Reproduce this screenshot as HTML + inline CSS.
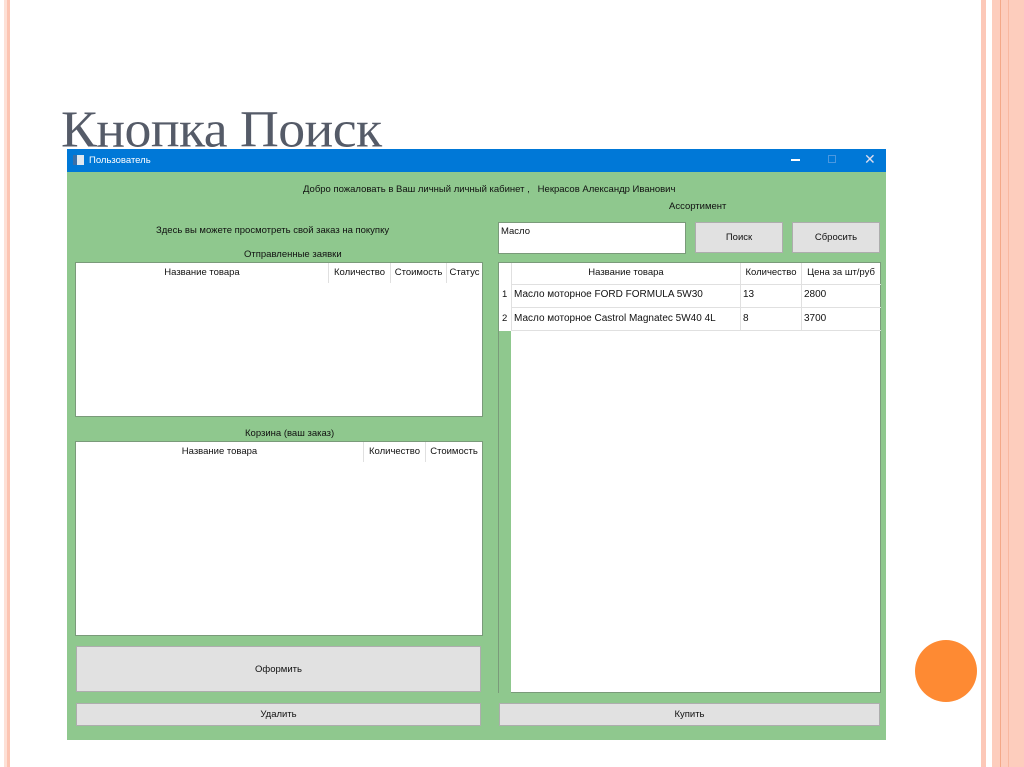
<!DOCTYPE html>
<html><head><meta charset="utf-8"><style>
*{margin:0;padding:0;box-sizing:border-box}
body{width:1024px;height:767px;background:#fff;position:relative;overflow:hidden;font-family:"Liberation Sans",sans-serif;font-size:9.5px;color:#111}
.a{position:absolute}
.btn{position:absolute;background:#e1e1e1;border:1px solid #adadad;display:flex;align-items:center;justify-content:center}
.w{position:absolute;background:#fff;border:1px solid #7a9a7a}
.c{position:absolute;top:0;height:20px;line-height:19px;text-align:center;border-right:1px solid #e0e0e0}
.t{position:absolute;white-space:nowrap}
</style></head><body>
<div class="a" style="left:4px;top:0;width:3px;height:767px;background:#fde0d6"></div>
<div class="a" style="left:7px;top:0;width:3px;height:767px;background:#fcc4b2"></div>
<div class="a" style="left:981px;top:0;width:5px;height:767px;background:#fcc8b8"></div>
<div class="a" style="left:992px;top:0;width:32px;height:767px;background:#fdcdbd"></div>
<div class="a" style="left:1000px;top:0;width:1px;height:767px;background:#f4a888"></div>
<div class="a" style="left:1008px;top:0;width:1px;height:767px;background:#f8b8a0"></div>
<div class="a" style="left:915px;top:640px;width:62px;height:62px;border-radius:50%;background:#fe8a33"></div>
<div class="t" style="left:61px;top:100px;font-family:'Liberation Serif',serif;font-size:48px;color:#555b68;letter-spacing:-0.5px;transform:scale(1.12,1.08);transform-origin:0 0">Кнопка Поиск</div>

<div class="a" style="left:67px;top:149px;width:819px;height:591px;background:#8fc88e"></div>
<div class="a" style="left:67px;top:149px;width:819px;height:23px;background:#0078d7;color:#fff"></div>
<div class="a" style="left:73px;top:155px;width:11px;height:10px;background:#dfe8f0;border-left:4px solid #3a6fa8"></div>
<div class="t" style="left:89px;top:155px;color:#fff;font-size:9.5px">Пользователь</div>
<div class="a" style="left:791px;top:159px;width:9px;height:1.5px;background:#fff"></div>
<div class="a" style="left:828px;top:155px;width:8px;height:8px;border:1px solid #4a98e0"></div>
<div class="t" style="left:864px;top:151px;color:#dde;font-size:14px">✕</div>

<div class="t" style="left:303px;top:184px">Добро пожаловать в Ваш личный личный кабинет ,&nbsp;&nbsp;&nbsp;Некрасов Александр Иванович</div>
<div class="t" style="left:669px;top:201px">Ассортимент</div>
<div class="t" style="left:156px;top:225px">Здесь вы можете просмотреть свой заказ на покупку</div>
<div class="t" style="left:244px;top:249px">Отправленные заявки</div>

<div class="w" style="left:75px;top:262px;width:408px;height:155px">
<div class="c" style="left:0;width:253px">Название товара</div>
<div class="c" style="left:253px;width:62px">Количество</div>
<div class="c" style="left:315px;width:56px">Стоимость</div>
<div class="c" style="left:371px;width:35px;border:0">Статус</div>
</div>
<div class="t" style="left:245px;top:428px">Корзина (ваш заказ)</div>
<div class="w" style="left:75px;top:441px;width:408px;height:195px">
<div class="c" style="left:0;width:288px">Название товара</div>
<div class="c" style="left:288px;width:62px">Количество</div>
<div class="c" style="left:350px;width:56px;border:0">Стоимость</div>
</div>
<div class="btn" style="left:76px;top:646px;width:405px;height:46px">Оформить</div>
<div class="btn" style="left:76px;top:703px;width:405px;height:23px">Удалить</div>

<div class="a" style="left:498px;top:222px;width:188px;height:32px;background:#fff;border:1px solid #7a9a7a"></div>
<div class="t" style="left:501px;top:226px">Масло</div>
<div class="btn" style="left:695px;top:222px;width:88px;height:31px">Поиск</div>
<div class="btn" style="left:792px;top:222px;width:88px;height:31px">Сбросить</div>

<div class="a" style="left:498px;top:262px;width:383px;height:431px;background:#fff;border:1px solid #7a9a7a">
<div class="a" style="left:0;top:68px;width:12px;height:362px;background:#8fc88e"></div>
<div class="a" style="left:12px;top:0;width:1px;height:68px;background:#e0e0e0"></div>
<div class="c" style="left:13px;width:229px;height:21px">Название товара</div>
<div class="c" style="left:242px;width:61px;height:21px">Количество</div>
<div class="c" style="left:303px;width:78px;height:21px;border:0">Цена за шт/руб</div>
<div class="a" style="left:13px;top:21px;width:369px;height:1px;background:#e0e0e0"></div>
<div class="a" style="left:13px;top:44px;width:369px;height:1px;background:#e0e0e0"></div>
<div class="a" style="left:13px;top:67px;width:369px;height:1px;background:#e0e0e0"></div>
<div class="a" style="left:241px;top:21px;width:1px;height:47px;background:#e0e0e0"></div>
<div class="a" style="left:302px;top:21px;width:1px;height:47px;background:#e0e0e0"></div>
<div class="t" style="left:3px;top:26px">1</div>
<div class="t" style="left:15px;top:26px;font-size:10px">Масло моторное FORD FORMULA 5W30</div>
<div class="t" style="left:244px;top:26px;font-size:10px">13</div>
<div class="t" style="left:305px;top:26px;font-size:10px">2800</div>
<div class="t" style="left:3px;top:50px">2</div>
<div class="t" style="left:15px;top:50px;font-size:10px">Масло моторное Castrol Magnatec 5W40 4L</div>
<div class="t" style="left:244px;top:50px;font-size:10px">8</div>
<div class="t" style="left:305px;top:50px;font-size:10px">3700</div>
</div>
<div class="btn" style="left:499px;top:703px;width:381px;height:23px">Купить</div>
</body></html>
